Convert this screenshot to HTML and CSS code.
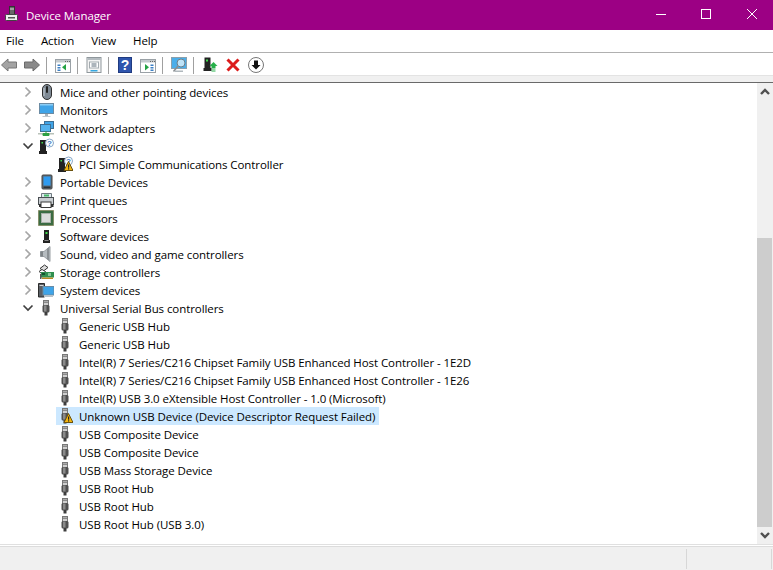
FILE: index.html
```html
<!DOCTYPE html>
<html lang="en">
<head>
  <meta charset="UTF-8">
  <title>Device Manager</title>
  <link rel="stylesheet" href="styles.css">
</head>
<body>

  <svg class="defs" xmlns="http://www.w3.org/2000/svg">
    <symbol id="app" viewBox="0 0 16 16">
      <rect x="6.5" y="0.5" width="5" height="8" fill="#666" stroke="#333"/>
      <rect x="7.5" y="2" width="1" height="2" fill="#ddd"/>
      <rect x="9.5" y="2" width="1" height="2" fill="#ddd"/>
      <rect x="2.5" y="8.5" width="12" height="6" rx="1" fill="#eee" stroke="#444"/>
      <rect x="5" y="11" width="7" height="1.5" fill="#555"/>
    </symbol>
    <symbol id="chev-r" viewBox="0 0 16 16">
      <path d="M5.5 3.5 L10 8 L5.5 12.5" fill="none" stroke="#a6a6a6" stroke-width="1.7"/>
    </symbol>
    <symbol id="chev-d" viewBox="0 0 16 16">
      <path d="M3.5 5.5 L8 10 L12.5 5.5" fill="none" stroke="#404040" stroke-width="1.7"/>
    </symbol>
    <symbol id="mouse" viewBox="0 0 16 16">
      <rect x="4.5" y="0.5" width="9" height="15" rx="4.5" fill="#7f8a95" stroke="#2f2f2f"/>
      <rect x="8" y="2" width="2" height="7" rx="1" fill="#222"/>
      <path d="M6 4 V12" stroke="#c6cdd4" stroke-width="1"/>
    </symbol>
    <symbol id="monitor" viewBox="0 0 16 16">
      <rect x="1.5" y="1.5" width="14" height="10" fill="#3fa4e8" stroke="#6b8ba3"/>
      <rect x="2" y="2" width="13" height="1.5" fill="#8ccdf5"/>
      <rect x="7" y="12" width="3" height="2" fill="#a9b4bc"/>
      <rect x="4.5" y="14" width="8" height="1" fill="#c0c8ce"/>
    </symbol>
    <symbol id="network" viewBox="0 0 16 16">
      <rect x="6.5" y="1.5" width="9" height="7" fill="#3fa4e8" stroke="#3e6f94"/>
      <rect x="2.5" y="4.5" width="10" height="7" fill="#54b2ee" stroke="#3e6f94"/>
      <rect x="0" y="13" width="16" height="1.5" fill="#b9c2b9"/>
      <path d="M5 13.5 H11 V15.5 H5 Z M8 11 V14" fill="#2ea043" stroke="#2ea043"/>
    </symbol>
    <symbol id="other" viewBox="0 0 16 16">
      <path d="M2 2 H8 V13 H9 V16 H1 V13 H2 Z" fill="#222"/>
      <rect x="3.5" y="4" width="1.5" height="1.5" fill="#3fdc4c"/>
      <circle cx="11.5" cy="5" r="4" fill="#fff" stroke="#8aa7c7"/>
      <text x="11.5" y="7.8" class="glyph-q">?</text>
    </symbol>
    <symbol id="warn" viewBox="0 0 16 16">
      <path d="M11.5 5.5 L16 14.5 H7 Z" fill="#f3b50f" stroke="#6b5210" stroke-linejoin="round"/>
      <rect x="11" y="8.5" width="1.2" height="3.2" fill="#222"/>
      <rect x="11" y="12.3" width="1.2" height="1.2" fill="#222"/>
    </symbol>
    <symbol id="portable" viewBox="0 0 16 16">
      <rect x="4" y="1" width="10" height="14" rx="1" fill="#5f6b75" stroke="#444"/>
      <rect x="5.5" y="2.5" width="7" height="9" fill="#2f9bf0"/>
      <rect x="5.5" y="12.5" width="7" height="1.5" fill="#2c3338"/>
    </symbol>
    <symbol id="printer" viewBox="0 0 16 16">
      <path d="M3.5 1.5 H13.5 V6 H3.5 Z" fill="#dfe9ee" stroke="#6f7a80"/>
      <rect x="6" y="2.5" width="5" height="2" fill="#46b868"/>
      <rect x="0.5" y="5.5" width="15" height="7" fill="#c9ced2" stroke="#4a4f53"/>
      <rect x="3" y="10" width="10" height="5.5" fill="#fff" stroke="#3a3a3a"/>
      <rect x="1" y="12" width="2" height="3" fill="#333"/>
      <rect x="13" y="12" width="2.5" height="3" fill="#333"/>
    </symbol>
    <symbol id="cpu" viewBox="0 0 16 16">
      <rect x="0.5" y="0.5" width="15" height="15" fill="#3f6f45" stroke="#6d6a35" stroke-dasharray="1 1"/>
      <rect x="1.5" y="1.5" width="13" height="13" fill="#3a6b42"/>
      <rect x="3.5" y="3.5" width="9" height="9" fill="#dcdcdc" stroke="#a8b0a8"/>
    </symbol>
    <symbol id="software" viewBox="0 0 16 16">
      <path d="M6 2 H11 V12 H12 V15 H5 V12 H6 Z" fill="#222"/>
      <rect x="7.5" y="4" width="2" height="2" fill="#3fdc4c"/>
      <rect x="6.5" y="12" width="4" height="1" fill="#888"/>
    </symbol>
    <symbol id="sound" viewBox="0 0 16 16">
      <path d="M2.5 5.5 H6 L12 0.5 V15.5 L6 10.5 H2.5 Z" fill="#b6bcc0" stroke="#9aa0a4"/>
      <path d="M9 2.5 L11 1.5 V14.5 L9 13 Z" fill="#8b9094"/>
      <path d="M2.5 5.5 H5 V10.5 H2.5 Z" fill="#7f8488"/>
    </symbol>
    <symbol id="storage" viewBox="0 0 16 16">
      <path d="M2 4.5 L6.5 1 L10 3.5 L5.5 7 Z" fill="#ddd" stroke="#333"/>
      <path d="M1 7.5 L4 5.5 L8 8 L5 10.5 Z" fill="#fff" stroke="#444"/>
      <rect x="3" y="8" width="13" height="5.5" fill="#2f8f4f"/>
      <rect x="4" y="9" width="3" height="2" fill="#14532d"/>
      <rect x="10" y="9" width="3" height="3" fill="#88c79a"/>
      <rect x="4" y="13.5" width="11" height="1.5" fill="#b68b25"/>
      <rect x="2" y="10" width="1.5" height="5" fill="#555"/>
    </symbol>
    <symbol id="system" viewBox="0 0 16 16">
      <path d="M0.5 1.5 H6.5 V15 H0.5 Z" fill="#5b6066" stroke="#2c2c2c"/>
      <rect x="1.5" y="3" width="4" height="1" fill="#d5d5d5"/>
      <rect x="5" y="4.5" width="11" height="8.5" fill="#3fa4e8" stroke="#6b8ba3"/>
      <rect x="6" y="13" width="9" height="2" fill="#b9c2c8"/>
    </symbol>
    <symbol id="usb" viewBox="0 0 16 16">
      <rect x="5.5" y="0.5" width="5" height="5" fill="#cfcfcf" stroke="#777"/>
      <rect x="6.5" y="1.5" width="1" height="1.5" fill="#444"/>
      <rect x="8.5" y="1.5" width="1" height="1.5" fill="#444"/>
      <rect x="4.5" y="5" width="7" height="7.5" rx="1.5" fill="#505050"/>
      <rect x="6" y="5.5" width="2.5" height="6" fill="#8a8a8a"/>
      <rect x="6.5" y="12" width="3" height="3.5" fill="#3d3d3d"/>
    </symbol>

    <symbol id="back" viewBox="0 0 16 16">
      <path d="M0.5 8 L7 2 V5 H15.5 V11 H7 V14 Z" fill="#a3a3a3" stroke="#777"/>
    </symbol>
    <symbol id="forward" viewBox="0 0 16 16">
      <path d="M15.5 8 L9 2 V5 H0.5 V11 H9 V14 Z" fill="#8a8a8a" stroke="#6a6a6a"/>
    </symbol>
    <symbol id="pane-l" viewBox="0 0 16 16">
      <rect x="0.5" y="2.5" width="15" height="13" fill="#fff" stroke="#9aa1a6"/>
      <rect x="1" y="3" width="14" height="2.5" fill="#c4cace"/>
      <path d="M10 4.5 H11 M12 4.5 H13 M14 4.5 H15" stroke="#666"/>
      <rect x="2.5" y="7.5" width="3" height="1.5" fill="#3b7fc4"/>
      <rect x="2.5" y="10" width="3" height="1.5" fill="#3b7fc4"/>
      <rect x="2.5" y="12.5" width="3" height="1.5" fill="#3b7fc4"/>
      <path d="M11 7 V13.5 L7 10.2 Z" fill="#25a244"/>
    </symbol>
    <symbol id="pane-r" viewBox="0 0 16 16">
      <rect x="0.5" y="2.5" width="15" height="13" fill="#fff" stroke="#9aa1a6"/>
      <rect x="1" y="3" width="14" height="2.5" fill="#c4cace"/>
      <path d="M10 4.5 H11 M12 4.5 H13 M14 4.5 H15" stroke="#666"/>
      <rect x="10.5" y="7.5" width="3" height="1.5" fill="#3b7fc4"/>
      <rect x="10.5" y="10" width="3" height="1.5" fill="#3b7fc4"/>
      <rect x="10.5" y="12.5" width="3" height="1.5" fill="#3b7fc4"/>
      <path d="M5 7 V13.5 L9 10.2 Z" fill="#25a244"/>
    </symbol>
    <symbol id="props" viewBox="0 0 16 16">
      <rect x="1" y="0.5" width="14" height="15" fill="#f4f4f4" stroke="#8f979c"/>
      <rect x="1.5" y="1" width="13" height="2" fill="#b4bbc0"/>
      <rect x="3.5" y="5" width="9" height="6" fill="#fff" stroke="#a4abb0"/>
      <path d="M5.5 7 H10.5 M5.5 9 H10.5" stroke="#5a6a78"/>
      <rect x="4.5" y="13" width="7" height="1.5" fill="#35a7e0"/>
    </symbol>
    <symbol id="help" viewBox="0 0 16 16">
      <rect x="1.5" y="0.5" width="13" height="15" fill="#2f55ad" stroke="#1f3a80"/>
      <text x="8" y="13" class="glyph-help">?</text>
    </symbol>
    <symbol id="scan" viewBox="0 0 16 16">
      <rect x="0.5" y="0.5" width="15" height="11" fill="#4aaeea" stroke="#8aa0ae"/>
      <rect x="4" y="13.5" width="8" height="1.5" fill="#b0b8bd"/>
      <circle cx="10" cy="6" r="4" fill="#bfe3f7" stroke="#6c7e8a"/>
      <path d="M7 9 L2.5 14.5" stroke="#8a8f92" stroke-width="1.6"/>
    </symbol>
    <symbol id="update" viewBox="0 0 16 16">
      <path d="M2.5 0.5 H8.5 V11 H9.5 V14 H1.5 V11 H2.5 Z" fill="#222"/>
      <rect x="4" y="2.5" width="2" height="2" fill="#3fdc4c"/>
      <path d="M11.5 5 L15.5 9 H13.5 V11 H9.5 V9 H7.5 Z" fill="#27b04a"/>
      <path d="M9.5 12 H13.5 M9.5 14 H13.5" stroke="#27b04a"/>
    </symbol>
    <symbol id="remove" viewBox="0 0 16 16">
      <path d="M2.5 2.5 L13.5 13.5 M13.5 2.5 L2.5 13.5" stroke="#dc1c1c" stroke-width="3"/>
    </symbol>
    <symbol id="down" viewBox="0 0 16 16">
      <circle cx="8" cy="8" r="7.5" fill="#fff" stroke="#777"/>
      <path d="M6 3.5 H10 V8 H12.5 L8 12.5 L3.5 8 H6 Z" fill="#111"/>
    </symbol>
  </svg>

  <div class="window">
    <div class="titlebar">
      <svg class="icon app-icon"><use href="#app"/></svg>
      <span class="title">Device Manager</span>
      <div class="controls">
        <svg class="ctl" viewBox="0 0 10 10"><path d="M0 5.5 H10" stroke="#fff"/></svg>
        <svg class="ctl" viewBox="0 0 10 10"><rect x="0.5" y="0.5" width="9" height="9" fill="none" stroke="#fff"/></svg>
        <svg class="ctl close" viewBox="0 0 10 10"><path d="M0 0 L10 10 M10 0 L0 10" stroke="#fff"/></svg>
      </div>
    </div>

    <div class="menubar">
      <span>File</span>
      <span>Action</span>
      <span>View</span>
      <span>Help</span>
    </div>

    <div class="toolbar">
      <svg class="icon"><use href="#back"/></svg>
      <svg class="icon"><use href="#forward"/></svg>
      <div class="sep"></div>
      <svg class="icon"><use href="#pane-l"/></svg>
      <div class="sep"></div>
      <svg class="icon"><use href="#props"/></svg>
      <div class="sep"></div>
      <svg class="icon"><use href="#help"/></svg>
      <svg class="icon"><use href="#pane-r"/></svg>
      <div class="sep"></div>
      <svg class="icon"><use href="#scan"/></svg>
      <div class="sep"></div>
      <svg class="icon"><use href="#update"/></svg>
      <svg class="icon"><use href="#remove"/></svg>
      <svg class="icon"><use href="#down"/></svg>
    </div>
    <div class="band"></div>

    <div class="content">
      <div class="tree">
        <div class="row"><svg class="icon"><use href="#chev-r"/></svg><div class="node"><svg class="icon"><use href="#mouse"/></svg><span>Mice and other pointing devices</span></div></div>
        <div class="row"><svg class="icon"><use href="#chev-r"/></svg><div class="node"><svg class="icon"><use href="#monitor"/></svg><span>Monitors</span></div></div>
        <div class="row"><svg class="icon"><use href="#chev-r"/></svg><div class="node"><svg class="icon"><use href="#network"/></svg><span>Network adapters</span></div></div>
        <div class="row"><svg class="icon"><use href="#chev-d"/></svg><div class="node"><svg class="icon"><use href="#other"/></svg><span>Other devices</span></div></div>
        <div class="row child"><div class="node"><svg class="icon"><use href="#other"/><use href="#warn"/></svg><span>PCI Simple Communications Controller</span></div></div>
        <div class="row"><svg class="icon"><use href="#chev-r"/></svg><div class="node"><svg class="icon"><use href="#portable"/></svg><span>Portable Devices</span></div></div>
        <div class="row"><svg class="icon"><use href="#chev-r"/></svg><div class="node"><svg class="icon"><use href="#printer"/></svg><span>Print queues</span></div></div>
        <div class="row"><svg class="icon"><use href="#chev-r"/></svg><div class="node"><svg class="icon"><use href="#cpu"/></svg><span>Processors</span></div></div>
        <div class="row"><svg class="icon"><use href="#chev-r"/></svg><div class="node"><svg class="icon"><use href="#software"/></svg><span>Software devices</span></div></div>
        <div class="row"><svg class="icon"><use href="#chev-r"/></svg><div class="node"><svg class="icon"><use href="#sound"/></svg><span>Sound, video and game controllers</span></div></div>
        <div class="row"><svg class="icon"><use href="#chev-r"/></svg><div class="node"><svg class="icon"><use href="#storage"/></svg><span>Storage controllers</span></div></div>
        <div class="row"><svg class="icon"><use href="#chev-r"/></svg><div class="node"><svg class="icon"><use href="#system"/></svg><span>System devices</span></div></div>
        <div class="row"><svg class="icon"><use href="#chev-d"/></svg><div class="node"><svg class="icon"><use href="#usb"/></svg><span>Universal Serial Bus controllers</span></div></div>
        <div class="row child"><div class="node"><svg class="icon"><use href="#usb"/></svg><span>Generic USB Hub</span></div></div>
        <div class="row child"><div class="node"><svg class="icon"><use href="#usb"/></svg><span>Generic USB Hub</span></div></div>
        <div class="row child"><div class="node"><svg class="icon"><use href="#usb"/></svg><span>Intel(R) 7 Series/C216 Chipset Family USB Enhanced Host Controller - 1E2D</span></div></div>
        <div class="row child"><div class="node"><svg class="icon"><use href="#usb"/></svg><span>Intel(R) 7 Series/C216 Chipset Family USB Enhanced Host Controller - 1E26</span></div></div>
        <div class="row child"><div class="node"><svg class="icon"><use href="#usb"/></svg><span>Intel(R) USB 3.0 eXtensible Host Controller - 1.0 (Microsoft)</span></div></div>
        <div class="row child selected"><div class="node"><svg class="icon"><use href="#usb"/><use href="#warn"/></svg><span>Unknown USB Device (Device Descriptor Request Failed)</span></div></div>
        <div class="row child"><div class="node"><svg class="icon"><use href="#usb"/></svg><span>USB Composite Device</span></div></div>
        <div class="row child"><div class="node"><svg class="icon"><use href="#usb"/></svg><span>USB Composite Device</span></div></div>
        <div class="row child"><div class="node"><svg class="icon"><use href="#usb"/></svg><span>USB Mass Storage Device</span></div></div>
        <div class="row child"><div class="node"><svg class="icon"><use href="#usb"/></svg><span>USB Root Hub</span></div></div>
        <div class="row child"><div class="node"><svg class="icon"><use href="#usb"/></svg><span>USB Root Hub</span></div></div>
        <div class="row child"><div class="node"><svg class="icon"><use href="#usb"/></svg><span>USB Root Hub (USB 3.0)</span></div></div>
      </div>

      <div class="scrollbar">
        <div class="arrow"><svg viewBox="0 0 16 17"><path d="M4 11 L8 7 L12 11" fill="none" stroke="#505050" stroke-width="2.4"/></svg></div>
        <div class="track"><div class="thumb"></div></div>
        <div class="arrow"><svg viewBox="0 0 16 17"><path d="M4 6 L8 10 L12 6" fill="none" stroke="#505050" stroke-width="2.4"/></svg></div>
      </div>
    </div>

    <div class="statusbar">
      <div class="pane main"></div>
      <div class="pane wide"></div>
      <div class="pane end"></div>
    </div>
  </div>

</body>
</html>
```

FILE: styles.css
```css
html, body {
  margin: 0;
  padding: 0;
}

body {
  font-family: "Open Sans", "Noto Sans", sans-serif;
  font-size: 11.5px;
  letter-spacing: -0.08px;
  color: #000;
  background: #fff;
  overflow: hidden;
}

.defs {
  display: none;
}

.glyph-q {
  font-family: "Liberation Sans", sans-serif;
  font-size: 8px;
  font-weight: bold;
  text-anchor: middle;
  fill: #3a78c2;
}

.glyph-help {
  font-family: "Liberation Sans", sans-serif;
  font-size: 14px;
  font-weight: bold;
  text-anchor: middle;
  fill: #fff;
}

.window {
  display: flex;
  flex-direction: column;
  width: 773px;
  height: 570px;
}

.icon {
  width: 16px;
  height: 16px;
  flex: none;
}

.titlebar {
  display: flex;
  align-items: center;
  height: 30px;
  padding-left: 3px;
  background: #9c0084;
  color: #fff;
}

.app-icon {
  margin-bottom: 2px;
}

.title {
  margin-left: 7px;
}

.controls {
  display: flex;
  gap: 35px;
  margin-left: auto;
  margin-right: 16px;
  margin-bottom: 2px;
}

.ctl {
  width: 10px;
  height: 10px;
}

.ctl.close {
  margin-left: 1px;
}

.menubar {
  display: flex;
  gap: 17px;
  align-items: center;
  height: 20px;
  padding-left: 6px;
  padding-bottom: 2px;
  border-bottom: 1px solid #b0b0b0;
}

.toolbar {
  display: flex;
  align-items: center;
  gap: 7px;
  height: 20px;
  padding-left: 1px;
  padding-top: 2px;
}

.sep {
  width: 1px;
  height: 17px;
  margin: 0 1px 0 -1px;
  background: #a0a0a0;
}

.band {
  height: 6px;
  background: #f0f0f0;
  border-top: 1px solid #e3e3e3;
  border-bottom: 1px solid #696969;
}

.content {
  display: flex;
  height: 461px;
  border-bottom: 1px solid #e0e0e0;
}

.tree {
  flex: 1;
  padding-left: 20px;
}

.row {
  display: flex;
  align-items: center;
  height: 18px;
  gap: 2px;
}

.row.child {
  padding-left: 36px;
}

.node {
  display: flex;
  align-items: center;
  gap: 6px;
  height: 18px;
  padding: 0 4px 0 0;
}

.row.child .node {
  padding-left: 1px;
}

.selected .node {
  background: #cce8ff;
}

.scrollbar {
  display: flex;
  flex-direction: column;
  width: 16px;
  background: #f0f0f0;
}

.arrow {
  height: 17px;
}

.arrow svg {
  display: block;
  width: 16px;
  height: 17px;
}

.track {
  display: flex;
  flex: 1;
  flex-direction: column;
  justify-content: flex-end;
}

.thumb {
  height: 289px;
  width: 15px;
  background: #cdcdcd;
}

.statusbar {
  display: flex;
  flex: 1;
  margin-top: 1px;
  padding-top: 2px;
  background: #f0f0f0;
  border-top: 1px solid #dcdcdc;
}

.pane {
  height: 20px;
  border-right: 1px solid #d7d7d7;
}

.pane.main {
  width: 599px;
  border-right: 0;
}

.pane.wide {
  width: 87px;
}

.pane.end {
  width: 84px;
}
```
